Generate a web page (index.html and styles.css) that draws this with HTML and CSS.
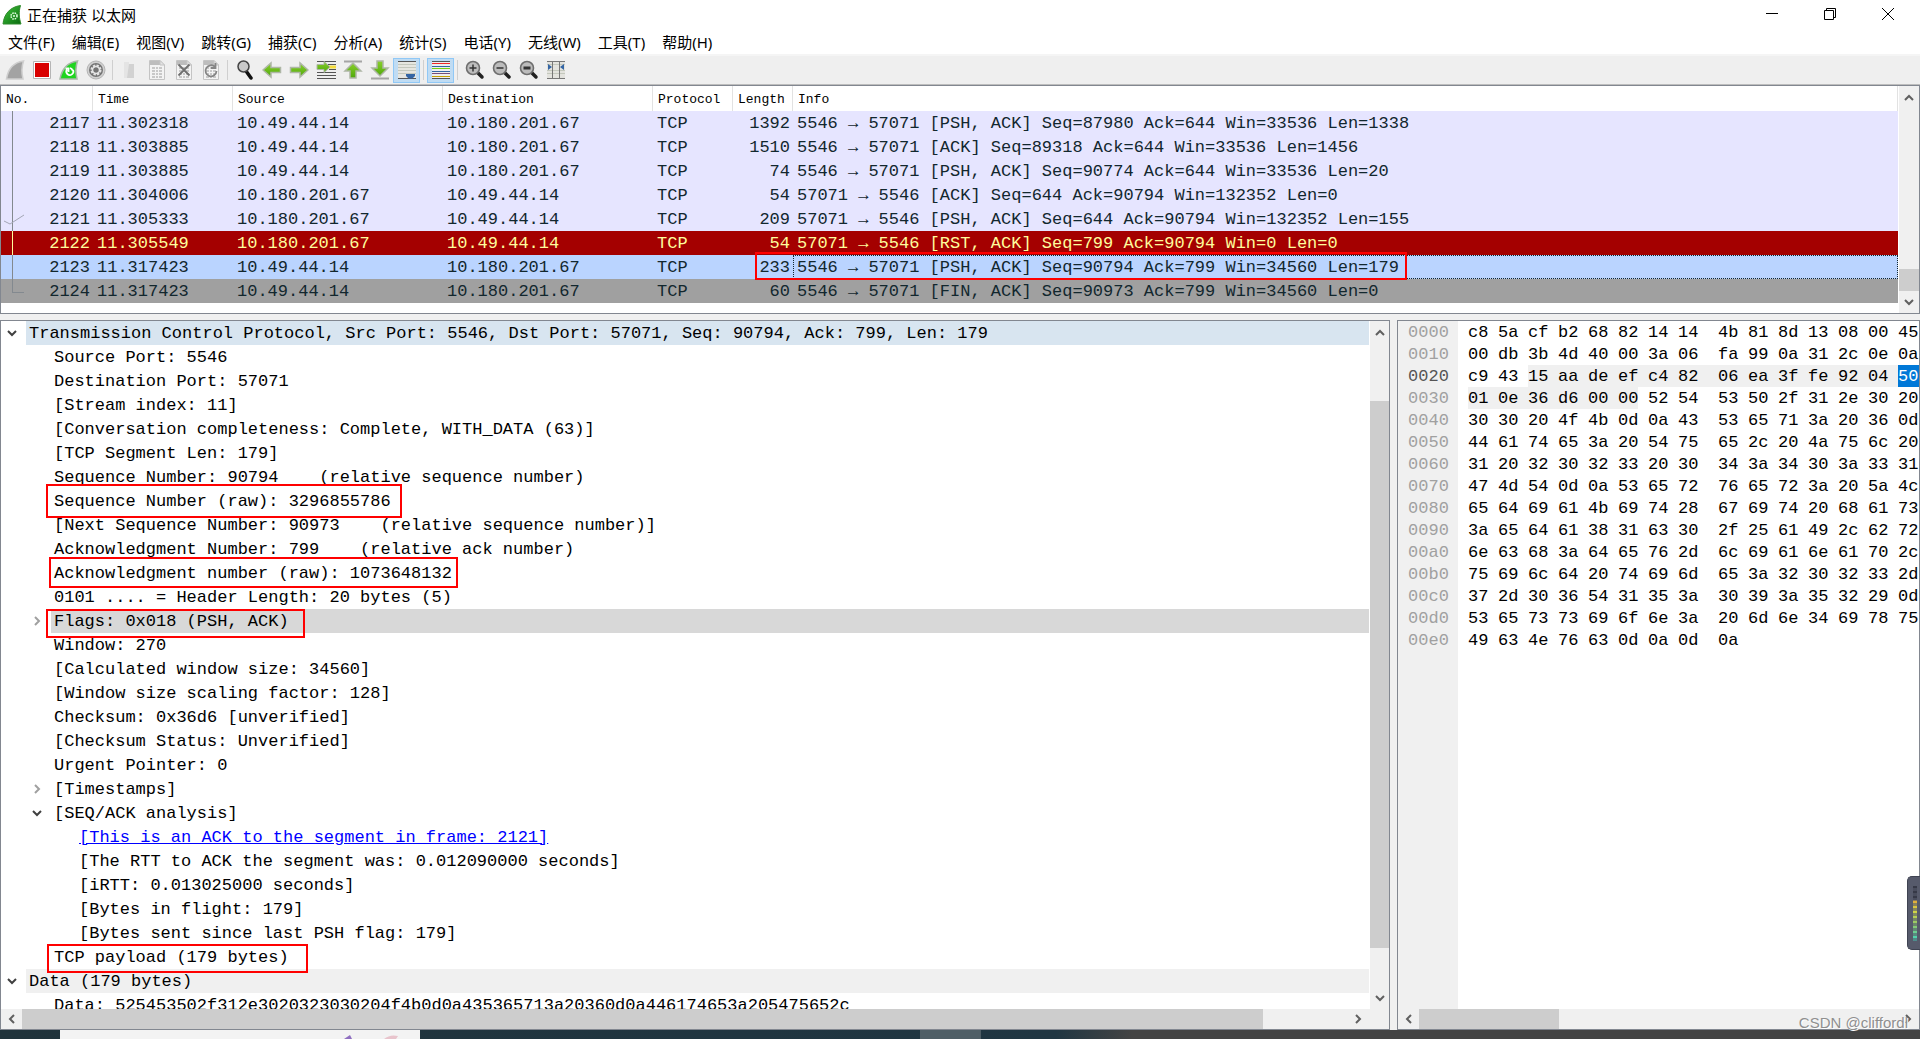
FILE: index.html
```html
<!DOCTYPE html>
<html lang="zh-CN">
<head>
<meta charset="utf-8">
<title>正在捕获 以太网</title>
<link rel="stylesheet" href="styles.css">
</head>
<body>
<svg class="defs" aria-hidden="true">
  <defs>
    <linearGradient id="fin" x1="0" y1="0" x2="1" y2="1"><stop offset="0" stop-color="#3fc43a"/><stop offset="1" stop-color="#0a6b10"/></linearGradient>
    <linearGradient id="leaf" x1="0" y1="0" x2="0" y2="1"><stop offset="0" stop-color="#8ad02c"/><stop offset="1" stop-color="#4fa80c"/></linearGradient>
    <symbol id="up" viewBox="0 0 10 7"><path d="M1 6 5 2 9 6" fill="none" stroke="currentColor" stroke-width="2"/></symbol>
    <symbol id="down" viewBox="0 0 10 7"><path d="M1 1 5 5 9 1" fill="none" stroke="currentColor" stroke-width="2"/></symbol>
    <symbol id="left" viewBox="0 0 7 10"><path d="M6 1 2 5 6 9" fill="none" stroke="currentColor" stroke-width="2"/></symbol>
    <symbol id="right" viewBox="0 0 7 10"><path d="M1 1 5 5 1 9" fill="none" stroke="currentColor" stroke-width="2"/></symbol>
    <symbol id="page" viewBox="0 0 20 20"><path d="M2.500.5H13L17.500 5V19.500H2.500Z" fill="#f3f3f3" stroke="#c4c4c4"/><path d="M3 1H13V5H3Z" fill="#bdbdbd"/><path d="M13 .5V5H17.500Z" fill="#e4e4e4" stroke="#c4c4c4"/></symbol>
    <symbol id="grid" viewBox="0 0 20 20"><path d="M5 8H8M9 8H11M12 8H15M5 11H8M9 11H11M12 11H15M5 14H8M9 14H11M12 14H15M5 17H8M9 17H11M12 17H15" stroke="#c8c8c8" stroke-width="2"/></symbol>
    <symbol id="lens" viewBox="0 0 20 20"><path d="M12 12 17 17" stroke="#222" stroke-width="3.500" stroke-linecap="round"/><circle cx="8" cy="8" r="6.500" fill="#bcbcbc" stroke="#6e6e6e" stroke-width="1.600"/></symbol>
  </defs>
</svg>

<div class="window">
  <header class="titlebar">
    <svg class="logo" viewBox="0 0 20 20"><path d="M1 19C2 9 8 2 18.500.5 16.500 7 17 13 19 19Z" fill="url(#fin)" stroke="#2f8a2c"/><circle cx="12" cy="11" r="3" fill="none" stroke="#e2ffe0" stroke-width="1.500" stroke-dasharray="1.500 .9"/><circle cx="12" cy="11" r="1" fill="#e2ffe0"/></svg>
    <h1>正在捕获 以太网</h1>
    <div class="controls">
      <button aria-label="最小化"><svg viewBox="0 0 12 12"><path d="M0 5.500H12" stroke="#000"/></svg></button>
      <button aria-label="还原"><svg viewBox="0 0 12 12"><path d="M.5 2.500H9.500V11.500H.5ZM2.500 2.500V.5H11.500V9.500H9.500" fill="none" stroke="#000"/></svg></button>
      <button aria-label="关闭"><svg viewBox="0 0 12 12"><path d="M0 0 12 12M12 0 0 12" stroke="#000"/></svg></button>
    </div>
  </header>

  <nav class="menubar">
    <button>文件(F)</button><button>编辑(E)</button><button>视图(V)</button><button>跳转(G)</button><button>捕获(C)</button><button>分析(A)</button><button>统计(S)</button><button>电话(Y)</button><button>无线(W)</button><button>工具(T)</button><button>帮助(H)</button>
  </nav>

  <div class="toolbar">
    <button aria-label="开始捕获"><svg viewBox="0 0 20 20"><path d="M1.500 19C3 9 8 2.500 18.500 1 16.500 7 16.500 13 18 19Z" fill="#a3a3a3" stroke="#cfcfcf" stroke-width="1.500"/></svg></button>
    <button aria-label="停止捕获"><svg viewBox="0 0 20 20"><path d="M1.500 1.500H18.500V18.500H1.500Z" fill="#fff" stroke="#b5b5b5"/><path d="M3 3H17V17H3Z" fill="#d90000"/></svg></button>
    <button aria-label="重新开始捕获"><svg viewBox="0 0 20 20"><path d="M1 19C3 9 8 2.500 18.500 1 16.500 7 16.500 13 18 19Z" fill="#1fd51f" stroke="#a8b8a8" stroke-width="1.500"/><path d="M8 9.500A3.500 3.500 0 1 0 14 10M13.500 10.500A3.500 3.500 0 0 0 11 8M9.500 12V8.500H6.500" fill="none" stroke="#fff" stroke-width="1.800"/></svg></button>
    <button aria-label="捕获选项"><svg viewBox="0 0 20 20"><circle cx="10" cy="10" r="9" fill="#d0d0d0" stroke="#b4b4b4"/><circle cx="10" cy="10" r="7" fill="#747474"/><circle cx="10" cy="10" r="4.300" fill="none" stroke="#e4e4e4" stroke-width="2.500" stroke-dasharray="2.200 1.170"/><circle cx="10" cy="10" r="3.500" fill="none" stroke="#e4e4e4" stroke-width="1.500"/><circle cx="10" cy="10" r="2" fill="#747474"/></svg></button>
    <i class="sep"></i>
    <button aria-label="打开"><svg viewBox="0 0 20 20"><path d="M4 2H9V18H4Z" fill="#e4e4e4"/><path d="M9 4H14V18L7 18Z" fill="#d2d2d2"/></svg></button>
    <button aria-label="保存"><svg viewBox="0 0 20 20"><use href="#page"/><use href="#grid"/></svg></button>
    <button aria-label="关闭文件"><svg viewBox="0 0 20 20"><use href="#page"/><use href="#grid"/><path d="M4.500 4.500 15.500 15.500M15.500 4.500 4.500 15.500" stroke="#6f6f6f" stroke-width="1.800"/></svg></button>
    <button aria-label="重新加载"><svg viewBox="0 0 20 20"><use href="#page"/><use href="#grid"/><path d="M14 7A5.500 5.500 0 1 0 15.500 11M14.500 3V8H10" fill="none" stroke="#858585" stroke-width="1.800"/></svg></button>
    <i class="sep"></i>
    <button aria-label="查找"><svg viewBox="0 0 20 20"><path d="M11 11 16 18" stroke="#111" stroke-width="3.500" stroke-linecap="round"/><circle cx="8.500" cy="6.500" r="5.500" fill="#c9c9c9" stroke="#444" stroke-width="1.500"/></svg></button>
    <button aria-label="上一分组"><svg viewBox="0 0 20 20"><path d="M1 10 9 3V7.500H18.500V12.500H9V17Z" fill="url(#leaf)" stroke="#aeb7a6" stroke-width="1.500"/></svg></button>
    <button aria-label="下一分组"><svg viewBox="0 0 20 20"><path d="M19 10 11 3V7.500H1.500V12.500H11V17Z" fill="url(#leaf)" stroke="#aeb7a6" stroke-width="1.500"/></svg></button>
    <button aria-label="转到分组"><svg viewBox="0 0 20 20"><path d="M1 1.500H20M1 12.500H20M1 15.500H20M1 18.500H20M12 4.500H20M13 9.500H20" stroke="#555"/><path d="M13 7H20" stroke="#f5dc3c" stroke-width="3"/><path d="M14 7 8 1.500V4.500H1V9.500H8V12.500Z" fill="url(#leaf)" stroke="#aeb7a6"/></svg></button>
    <button aria-label="首个分组"><svg viewBox="0 0 20 20"><path d="M1 1.500H19" stroke="#a5a5a5" stroke-width="2"/><path d="M10 3 18 11H13V18H7V11H2Z" fill="url(#leaf)" stroke="#aeb7a6" stroke-width="1.500"/></svg></button>
    <button aria-label="最新分组"><svg viewBox="0 0 20 20"><path d="M1 18.500H19" stroke="#a5a5a5" stroke-width="2"/><path d="M10 16 18 8H13V1H7V8H2Z" fill="url(#leaf)" stroke="#aeb7a6" stroke-width="1.500"/></svg></button>
    <button class="on" aria-label="自动滚动"><svg viewBox="0 0 20 20"><path d="M1 1H19V19H1Z" fill="#e6e6e0"/><path d="M1 1.500H19M1 18.500H19" stroke="#555"/><path d="M1 4.500H19M1 7.500H19M1 10.500H19M1 13.500H19" stroke="#c4c8bd"/><path d="M9 14H18V16L15.500 18.500H11.500L9 16Z" fill="#3465a4"/></svg></button>
    <i class="sep"></i>
    <button class="on" aria-label="着色"><svg viewBox="0 0 20 20"><path d="M1 1H19V19H1Z" fill="#eee"/><path d="M1 1.500H19M1 18.500H19" stroke="#555"/><path d="M1 3.500H19" stroke="#ef2929"/><path d="M1 6.500H19" stroke="#3465a4"/><path d="M1 8.500H19" stroke="#73d216"/><path d="M1 11.500H19" stroke="#3465a4"/><path d="M1 13.500H19" stroke="#75507b"/><path d="M1 16.500H19" stroke="#c4a000"/></svg></button>
    <i class="sep"></i>
    <button aria-label="放大"><svg viewBox="0 0 20 20"><use href="#lens"/><path d="M4.500 8H11.500M8 4.500V11.500" stroke="#333" stroke-width="1.500"/></svg></button>
    <button aria-label="缩小"><svg viewBox="0 0 20 20"><use href="#lens"/><path d="M4.500 8H11.500" stroke="#333" stroke-width="1.500"/></svg></button>
    <button aria-label="正常大小"><svg viewBox="0 0 20 20"><use href="#lens"/><path d="M4.500 8H11.500" stroke="#333" stroke-width="3"/></svg></button>
    <button aria-label="调整列宽"><svg viewBox="0 0 20 20"><path d="M1 1H19V19H1Z" fill="#e3e3de"/><path d="M1 4.500H19M1 10.500H19M1 13.500H19" stroke="#c4c8bd"/><path d="M1 1.500H19M1 18.500H19M6.500 1V19M13.500 1V19" stroke="#777"/><path d="M2 4 6 7 2 10ZM18 4 14 7 18 10Z" fill="#3465a4"/></svg></button>
  </div>

  <section class="pane packets">
    <table>
      <colgroup><col class="c-no"><col class="c-time"><col class="c-addr"><col class="c-addr"><col class="c-proto"><col class="c-len"><col></colgroup>
      <thead><tr><th>No.</th><th>Time</th><th>Source</th><th>Destination</th><th>Protocol</th><th>Length</th><th>Info</th></tr></thead>
      <tbody>
        <tr><td>2117</td><td>11.302318</td><td>10.49.44.14</td><td>10.180.201.67</td><td>TCP</td><td>1392</td><td>5546 → 57071 [PSH, ACK] Seq=87980 Ack=644 Win=33536 Len=1338</td></tr>
        <tr><td>2118</td><td>11.303885</td><td>10.49.44.14</td><td>10.180.201.67</td><td>TCP</td><td>1510</td><td>5546 → 57071 [ACK] Seq=89318 Ack=644 Win=33536 Len=1456</td></tr>
        <tr><td>2119</td><td>11.303885</td><td>10.49.44.14</td><td>10.180.201.67</td><td>TCP</td><td>74</td><td>5546 → 57071 [PSH, ACK] Seq=90774 Ack=644 Win=33536 Len=20</td></tr>
        <tr><td>2120</td><td>11.304006</td><td>10.180.201.67</td><td>10.49.44.14</td><td>TCP</td><td>54</td><td>57071 → 5546 [ACK] Seq=644 Ack=90794 Win=132352 Len=0</td></tr>
        <tr><td><svg class="acked" viewBox="0 0 22 12"><path d="M1 7 7 10 21 1" fill="none" stroke="#a3a6b5"/></svg>2121</td><td>11.305333</td><td>10.180.201.67</td><td>10.49.44.14</td><td>TCP</td><td>209</td><td>57071 → 5546 [PSH, ACK] Seq=644 Ack=90794 Win=132352 Len=155</td></tr>
        <tr class="rst"><td>2122</td><td>11.305549</td><td>10.180.201.67</td><td>10.49.44.14</td><td>TCP</td><td>54</td><td>57071 → 5546 [RST, ACK] Seq=799 Ack=90794 Win=0 Len=0</td></tr>
        <tr class="selected"><td>2123</td><td>11.317423</td><td>10.49.44.14</td><td>10.180.201.67</td><td>TCP</td><td>233</td><td>5546 → 57071 [PSH, ACK] Seq=90794 Ack=799 Win=34560 Len=179</td></tr>
        <tr class="fin"><td>2124</td><td>11.317423</td><td>10.49.44.14</td><td>10.180.201.67</td><td>TCP</td><td>60</td><td>5546 → 57071 [FIN, ACK] Seq=90973 Ack=799 Win=34560 Len=0</td></tr>
      </tbody>
    </table>
    <div class="vscroll at-end">
      <button aria-label="向上"><svg class="v"><use href="#up"/></svg></button>
      <i class="thumb"></i>
      <button aria-label="向下"><svg class="v"><use href="#down"/></svg></button>
    </div>
  </section>

  <div class="split">
    <section class="pane details">
      <div class="body">
        <ul class="tree">
          <li class="current"><button aria-label="折叠"><svg class="v"><use href="#down"/></svg></button><span>Transmission Control Protocol, Src Port: 5546, Dst Port: 57071, Seq: 90794, Ack: 799, Len: 179</span></li>
          <li class="l1"><span>Source Port: 5546</span></li>
          <li class="l1"><span>Destination Port: 57071</span></li>
          <li class="l1"><span>[Stream index: 11]</span></li>
          <li class="l1"><span>[Conversation completeness: Complete, WITH_DATA (63)]</span></li>
          <li class="l1"><span>[TCP Segment Len: 179]</span></li>
          <li class="l1"><span>Sequence Number: 90794    (relative sequence number)</span></li>
          <li class="l1"><span>Sequence Number (raw): 3296855786</span></li>
          <li class="l1"><span>[Next Sequence Number: 90973    (relative sequence number)]</span></li>
          <li class="l1"><span>Acknowledgment Number: 799    (relative ack number)</span></li>
          <li class="l1"><span>Acknowledgment number (raw): 1073648132</span></li>
          <li class="l1"><span>0101 .... = Header Length: 20 bytes (5)</span></li>
          <li class="l1 picked"><button class="closed" aria-label="展开"><svg class="h"><use href="#right"/></svg></button><span>Flags: 0x018 (PSH, ACK)</span></li>
          <li class="l1"><span>Window: 270</span></li>
          <li class="l1"><span>[Calculated window size: 34560]</span></li>
          <li class="l1"><span>[Window size scaling factor: 128]</span></li>
          <li class="l1"><span>Checksum: 0x36d6 [unverified]</span></li>
          <li class="l1"><span>[Checksum Status: Unverified]</span></li>
          <li class="l1"><span>Urgent Pointer: 0</span></li>
          <li class="l1"><button class="closed" aria-label="展开"><svg class="h"><use href="#right"/></svg></button><span>[Timestamps]</span></li>
          <li class="l1"><button aria-label="折叠"><svg class="v"><use href="#down"/></svg></button><span>[SEQ/ACK analysis]</span></li>
          <li class="l2"><span><a href="#frame-2121">[This is an ACK to the segment in frame: 2121]</a></span></li>
          <li class="l2"><span>[The RTT to ACK the segment was: 0.012090000 seconds]</span></li>
          <li class="l2"><span>[iRTT: 0.013025000 seconds]</span></li>
          <li class="l2"><span>[Bytes in flight: 179]</span></li>
          <li class="l2"><span>[Bytes sent since last PSH flag: 179]</span></li>
          <li class="l1"><span>TCP payload (179 bytes)</span></li>
          <li class="proto"><button aria-label="折叠"><svg class="v"><use href="#down"/></svg></button><span>Data (179 bytes)</span></li>
          <li class="l1"><span>Data: 525453502f312e3020323030204f4b0d0a435365713a20360d0a446174653a205475652c</span></li>
        </ul>
        <div class="vscroll">
          <button aria-label="向上"><svg class="v"><use href="#up"/></svg></button>
          <i class="thumb"></i>
          <button aria-label="向下"><svg class="v"><use href="#down"/></svg></button>
        </div>
      </div>
      <div class="hscroll">
        <button aria-label="向左"><svg class="h"><use href="#left"/></svg></button>
        <i class="thumb"></i>
        <button aria-label="向右"><svg class="h"><use href="#right"/></svg></button>
      </div>
    </section>

    <section class="pane bytes">
      <div class="body">
        <table>
          <colgroup><col class="c-off"><col class="c-byte" span="7"><col class="c-mid"><col class="c-byte" span="7"></colgroup>
          <tbody>
            <tr><th>0000</th><td>c8</td><td>5a</td><td>cf</td><td>b2</td><td>68</td><td>82</td><td>14</td><td>14</td><td>4b</td><td>81</td><td>8d</td><td>13</td><td>08</td><td>00</td><td>45</td></tr>
            <tr><th>0010</th><td>00</td><td>db</td><td>3b</td><td>4d</td><td>40</td><td>00</td><td>3a</td><td>06</td><td>fa</td><td>99</td><td>0a</td><td>31</td><td>2c</td><td>0e</td><td>0a</td></tr>
            <tr class="here"><th>0020</th><td>c9</td><td>43</td><td class="f">15</td><td class="f">aa</td><td class="f">de</td><td class="f">ef</td><td class="f">c4</td><td class="f">82</td><td class="f">06</td><td class="f">ea</td><td class="f">3f</td><td class="f">fe</td><td class="f">92</td><td class="f">04</td><td class="pick">50</td></tr>
            <tr><th>0030</th><td class="f">01</td><td class="f">0e</td><td class="f">36</td><td class="f">d6</td><td class="f">00</td><td class="f end">00</td><td>52</td><td>54</td><td>53</td><td>50</td><td>2f</td><td>31</td><td>2e</td><td>30</td><td>20</td></tr>
            <tr><th>0040</th><td>30</td><td>30</td><td>20</td><td>4f</td><td>4b</td><td>0d</td><td>0a</td><td>43</td><td>53</td><td>65</td><td>71</td><td>3a</td><td>20</td><td>36</td><td>0d</td></tr>
            <tr><th>0050</th><td>44</td><td>61</td><td>74</td><td>65</td><td>3a</td><td>20</td><td>54</td><td>75</td><td>65</td><td>2c</td><td>20</td><td>4a</td><td>75</td><td>6c</td><td>20</td></tr>
            <tr><th>0060</th><td>31</td><td>20</td><td>32</td><td>30</td><td>32</td><td>33</td><td>20</td><td>30</td><td>34</td><td>3a</td><td>34</td><td>30</td><td>3a</td><td>33</td><td>31</td></tr>
            <tr><th>0070</th><td>47</td><td>4d</td><td>54</td><td>0d</td><td>0a</td><td>53</td><td>65</td><td>72</td><td>76</td><td>65</td><td>72</td><td>3a</td><td>20</td><td>5a</td><td>4c</td></tr>
            <tr><th>0080</th><td>65</td><td>64</td><td>69</td><td>61</td><td>4b</td><td>69</td><td>74</td><td>28</td><td>67</td><td>69</td><td>74</td><td>20</td><td>68</td><td>61</td><td>73</td></tr>
            <tr><th>0090</th><td>3a</td><td>65</td><td>64</td><td>61</td><td>38</td><td>31</td><td>63</td><td>30</td><td>2f</td><td>25</td><td>61</td><td>49</td><td>2c</td><td>62</td><td>72</td></tr>
            <tr><th>00a0</th><td>6e</td><td>63</td><td>68</td><td>3a</td><td>64</td><td>65</td><td>76</td><td>2d</td><td>6c</td><td>69</td><td>61</td><td>6e</td><td>61</td><td>70</td><td>2c</td></tr>
            <tr><th>00b0</th><td>75</td><td>69</td><td>6c</td><td>64</td><td>20</td><td>74</td><td>69</td><td>6d</td><td>65</td><td>3a</td><td>32</td><td>30</td><td>32</td><td>33</td><td>2d</td></tr>
            <tr><th>00c0</th><td>37</td><td>2d</td><td>30</td><td>36</td><td>54</td><td>31</td><td>35</td><td>3a</td><td>30</td><td>39</td><td>3a</td><td>35</td><td>32</td><td>29</td><td>0d</td></tr>
            <tr><th>00d0</th><td>53</td><td>65</td><td>73</td><td>73</td><td>69</td><td>6f</td><td>6e</td><td>3a</td><td>20</td><td>6d</td><td>6e</td><td>34</td><td>69</td><td>78</td><td>75</td></tr>
            <tr><th>00e0</th><td>49</td><td>63</td><td>4e</td><td>76</td><td>63</td><td>0d</td><td>0a</td><td>0d</td><td>0a</td></tr>
          </tbody>
        </table>
      </div>
      <div class="hscroll">
        <button aria-label="向左"><svg class="h"><use href="#left"/></svg></button>
        <i class="thumb"></i>
        <button aria-label="向右"><svg class="h"><use href="#right"/></svg></button>
      </div>
    </section>
  </div>
</div>

<footer class="taskbar">
  <div class="search"><svg viewBox="0 0 80 9"><path d="M4 9 10 5 12 9Z" fill="#8f6fc0"/><path d="M44 9Q50 4 58 6L56 9Z" fill="#e8c4cc"/></svg></div>
  <i class="active"></i>
</footer>

<i class="note n-packet"></i>
<i class="note n-seq"></i>
<i class="note n-ack"></i>
<i class="note n-flags"></i>
<i class="note n-payload"></i>
<div class="meter"><i></i></div>
<div class="watermark">CSDN @cliffordl</div>
</body>
</html>
```
FILE: styles.css
```css
* { box-sizing: border-box; }

body {
  margin: 0;
  height: 100vh;
  display: flex;
  flex-direction: column;
  overflow: hidden;
  position: relative;
  background: #f0f0f0;
  color: #000;
  font-family: "Noto Sans", "Noto Sans CJK SC", sans-serif;
  font-size: 15px;
}

button {
  border: 0;
  padding: 0;
  margin: 0;
  background: none;
  color: inherit;
  font: inherit;
  display: flex;
  align-items: center;
  justify-content: center;
}

.defs { position: absolute; width: 0; height: 0; }

.window { flex: 1; min-height: 0; display: flex; flex-direction: column; }

/* title bar and menus */
.titlebar { height: 30px; display: flex; align-items: center; background: #fff; padding-left: 2px; }
.titlebar h1 { margin: 0 0 0 5px; font-size: 15px; line-height: 20px; font-weight: 400; }
.logo { width: 20px; height: 20px; }
.controls { margin-left: auto; display: flex; align-self: stretch; padding-right: 3px; }
.controls button { width: 58px; padding-bottom: 2px; }
.controls svg { width: 12px; height: 12px; }

.menubar { height: 26px; display: flex; align-items: center; gap: 17px; padding: 0 8px; background: #fff; border-bottom: 2px solid #f5f5f5; }
.menubar button { line-height: 20px; }

.toolbar { height: 29px; display: flex; align-items: center; padding: 0 1px; background: #efefef; border-bottom: 1px solid #bdbdbd; }
.toolbar button { width: 27px; height: 25px; }
.toolbar svg { width: 20px; height: 20px; }
.toolbar .on { background: #c0dcf3; border: 1px solid #90c8f6; }
.sep { width: 7px; height: 20px; background: linear-gradient(#cfcfcf, #cfcfcf) 3px 0 / 1px 20px no-repeat; }

/* panes */
.pane { background: #fff; border: 1px solid #828790; font-family: Consolas, "Liberation Mono", monospace; font-size: 17px; }
.body { flex: 1; min-height: 0; display: flex; overflow: hidden; }

.packets { display: flex; height: 229px; margin-bottom: 6px; }
.packets table { flex: 1; align-self: flex-start; width: 100%; border-collapse: separate; border-spacing: 0; table-layout: fixed; }
.c-no { width: 92px; }
.c-time { width: 140px; }
.c-addr { width: 210px; }
.c-proto { width: 80px; }
.c-len { width: 60px; }
.packets th {
  height: 25px;
  padding: 2px 0 0 5px;
  text-align: left;
  font-size: 13px;
  line-height: 16px;
  font-weight: 400;
  border-right: 1px solid #e2e2e2;
}
.packets td { position: relative; height: 24px; padding: 2px 3px 0 4px; line-height: 22px; white-space: pre; color: #12272e; background: #e6e5ff; }
.packets td:nth-child(1), .packets td:nth-child(6) { text-align: right; }
.packets td:first-child::before { content: ""; position: absolute; left: 11px; top: 0; height: 24px; border-left: 1px solid #83898f; }
.packets .rst td { background: #a40000; color: #fffc9c; }
.packets .rst td:first-child::before { border-color: #fffc9c; }
.packets .selected td { background: #bad4ff; }
.packets .selected td:last-child { outline: 1px dotted #12272e; outline-offset: -1px; }
.packets .fin td { background: #a0a0a0; }
.packets .fin td:first-child::before { height: 13px; width: 11px; border-bottom: 1px solid #83898f; }
.acked { position: absolute; left: 2px; top: 7px; width: 22px; height: 12px; }

/* scroll bars */
.v { width: 10px; height: 7px; }
.h { width: 7px; height: 10px; }
.vscroll, .hscroll { display: flex; background: #f0f0f0; color: #606060; }
.vscroll { width: 20px; flex-direction: column; border-left: 1px solid #fff; }
.vscroll button { height: 22px; }
.hscroll { height: 20px; }
.hscroll button { width: 21px; }
.thumb { background: #cdcdcd; }
.at-end { width: 21px; }
.at-end .thumb { margin-top: auto; height: 22px; }

.split { flex: 1; min-height: 0; display: flex; gap: 7px; }
.details { flex: 1391; min-width: 0; display: flex; flex-direction: column; }
.bytes { flex: 522; min-width: 0; display: flex; flex-direction: column; }
.details .vscroll .thumb { margin-top: 58px; height: calc(80% - 3px); }
.details .vscroll button:last-child { margin-top: auto; }
.details .hscroll { padding-right: 20px; }
.details .hscroll .thumb { flex: 0 1 1241px; }
.bytes .hscroll .thumb { flex: 0 1 140px; }
.hscroll button:last-child { margin-left: auto; }

/* dissection tree */
.tree { flex: 1; min-width: 0; margin: 0; padding: 0; list-style: none; }
.tree li { display: flex; height: 24px; line-height: 26px; white-space: pre; }
.tree li > button { width: 25px; padding-right: 3px; color: #404040; }
.tree .closed { color: #a0a0a0; }
.tree span { flex: 1; padding-left: 3px; }
.tree li > span:first-child { margin-left: 25px; }
.tree .l1 { padding-left: 25px; }
.tree .l2 { padding-left: 50px; }
.tree .current span { background: #d8e5f0; }
.tree .picked span { background: #d8d8d8; }
.tree .proto span { background: #f0f0f0; }
.tree a { color: #00f; }

/* hex dump */
.bytes .body { background: linear-gradient(#f0f0f0, #f0f0f0) 0 0 / 60px 100% no-repeat; }
.bytes table { align-self: flex-start; width: 530px; flex: none; border-spacing: 0; table-layout: fixed; }
.c-off { width: 70px; }
.c-byte { width: 30px; }
.c-mid { width: 40px; }
.bytes th, .bytes td { height: 22px; padding: 2px 0 0; line-height: 20px; text-align: left; }
.bytes th { padding-left: 10px; font-weight: 400; color: #a0a0a0; }
.bytes .here th { color: #555; }
.bytes .f { background: #f0f0f0; }
.bytes .end { background: linear-gradient(#f0f0f0, #f0f0f0) 0 0 / 20px 100% no-repeat; }
.bytes .pick { background: #0078d7; color: #fff; }

/* desktop strip below the window */
.taskbar { height: 9px; display: flex; padding-left: 60px; background: linear-gradient(90deg, #20333b 0, #203642 55%, #444 59%, #444 100%); }
.search { width: 360px; padding-left: 280px; background: #f3f3f3; }
.search svg { display: block; width: 80px; height: 9px; }
.active { margin-left: 500px; width: 61px; background: #4f5e66; }

/* marks laid over the capture */
.note { position: absolute; border: 2px solid #f00; }
.n-packet { left: 755px; top: 252px; width: 652px; height: 28px; }
.n-seq { left: 46px; top: 484px; width: 356px; height: 34px; }
.n-ack { left: 49px; top: 557px; width: 409px; height: 31px; }
.n-flags { left: 46px; top: 609px; width: 259px; height: 29px; }
.n-payload { left: 47px; top: 944px; width: 261px; height: 29px; }

.meter { position: absolute; right: 0; top: 876px; width: 13px; height: 74px; padding: 9px 3px 8px 5px; border-radius: 5px 0 0 5px; background: #565a6b; border: 1px solid #3f4352; border-right: 0; }
.meter i {
  display: block;
  height: 100%;
  background:
    repeating-linear-gradient(#0000 0 2px, #565a6b99 2px 5px),
    linear-gradient(#363947 0 25%, #e2a93a 26%, #d6d643 45%, #8fc86a 70%, #3fd6c0 100%);
}
.watermark { position: absolute; right: 12px; bottom: 6px; font-family: "Liberation Sans", sans-serif; font-size: 15px; line-height: 20px; color: #8f8f8f; text-shadow: 1px 1px 0 #fff; }
```
